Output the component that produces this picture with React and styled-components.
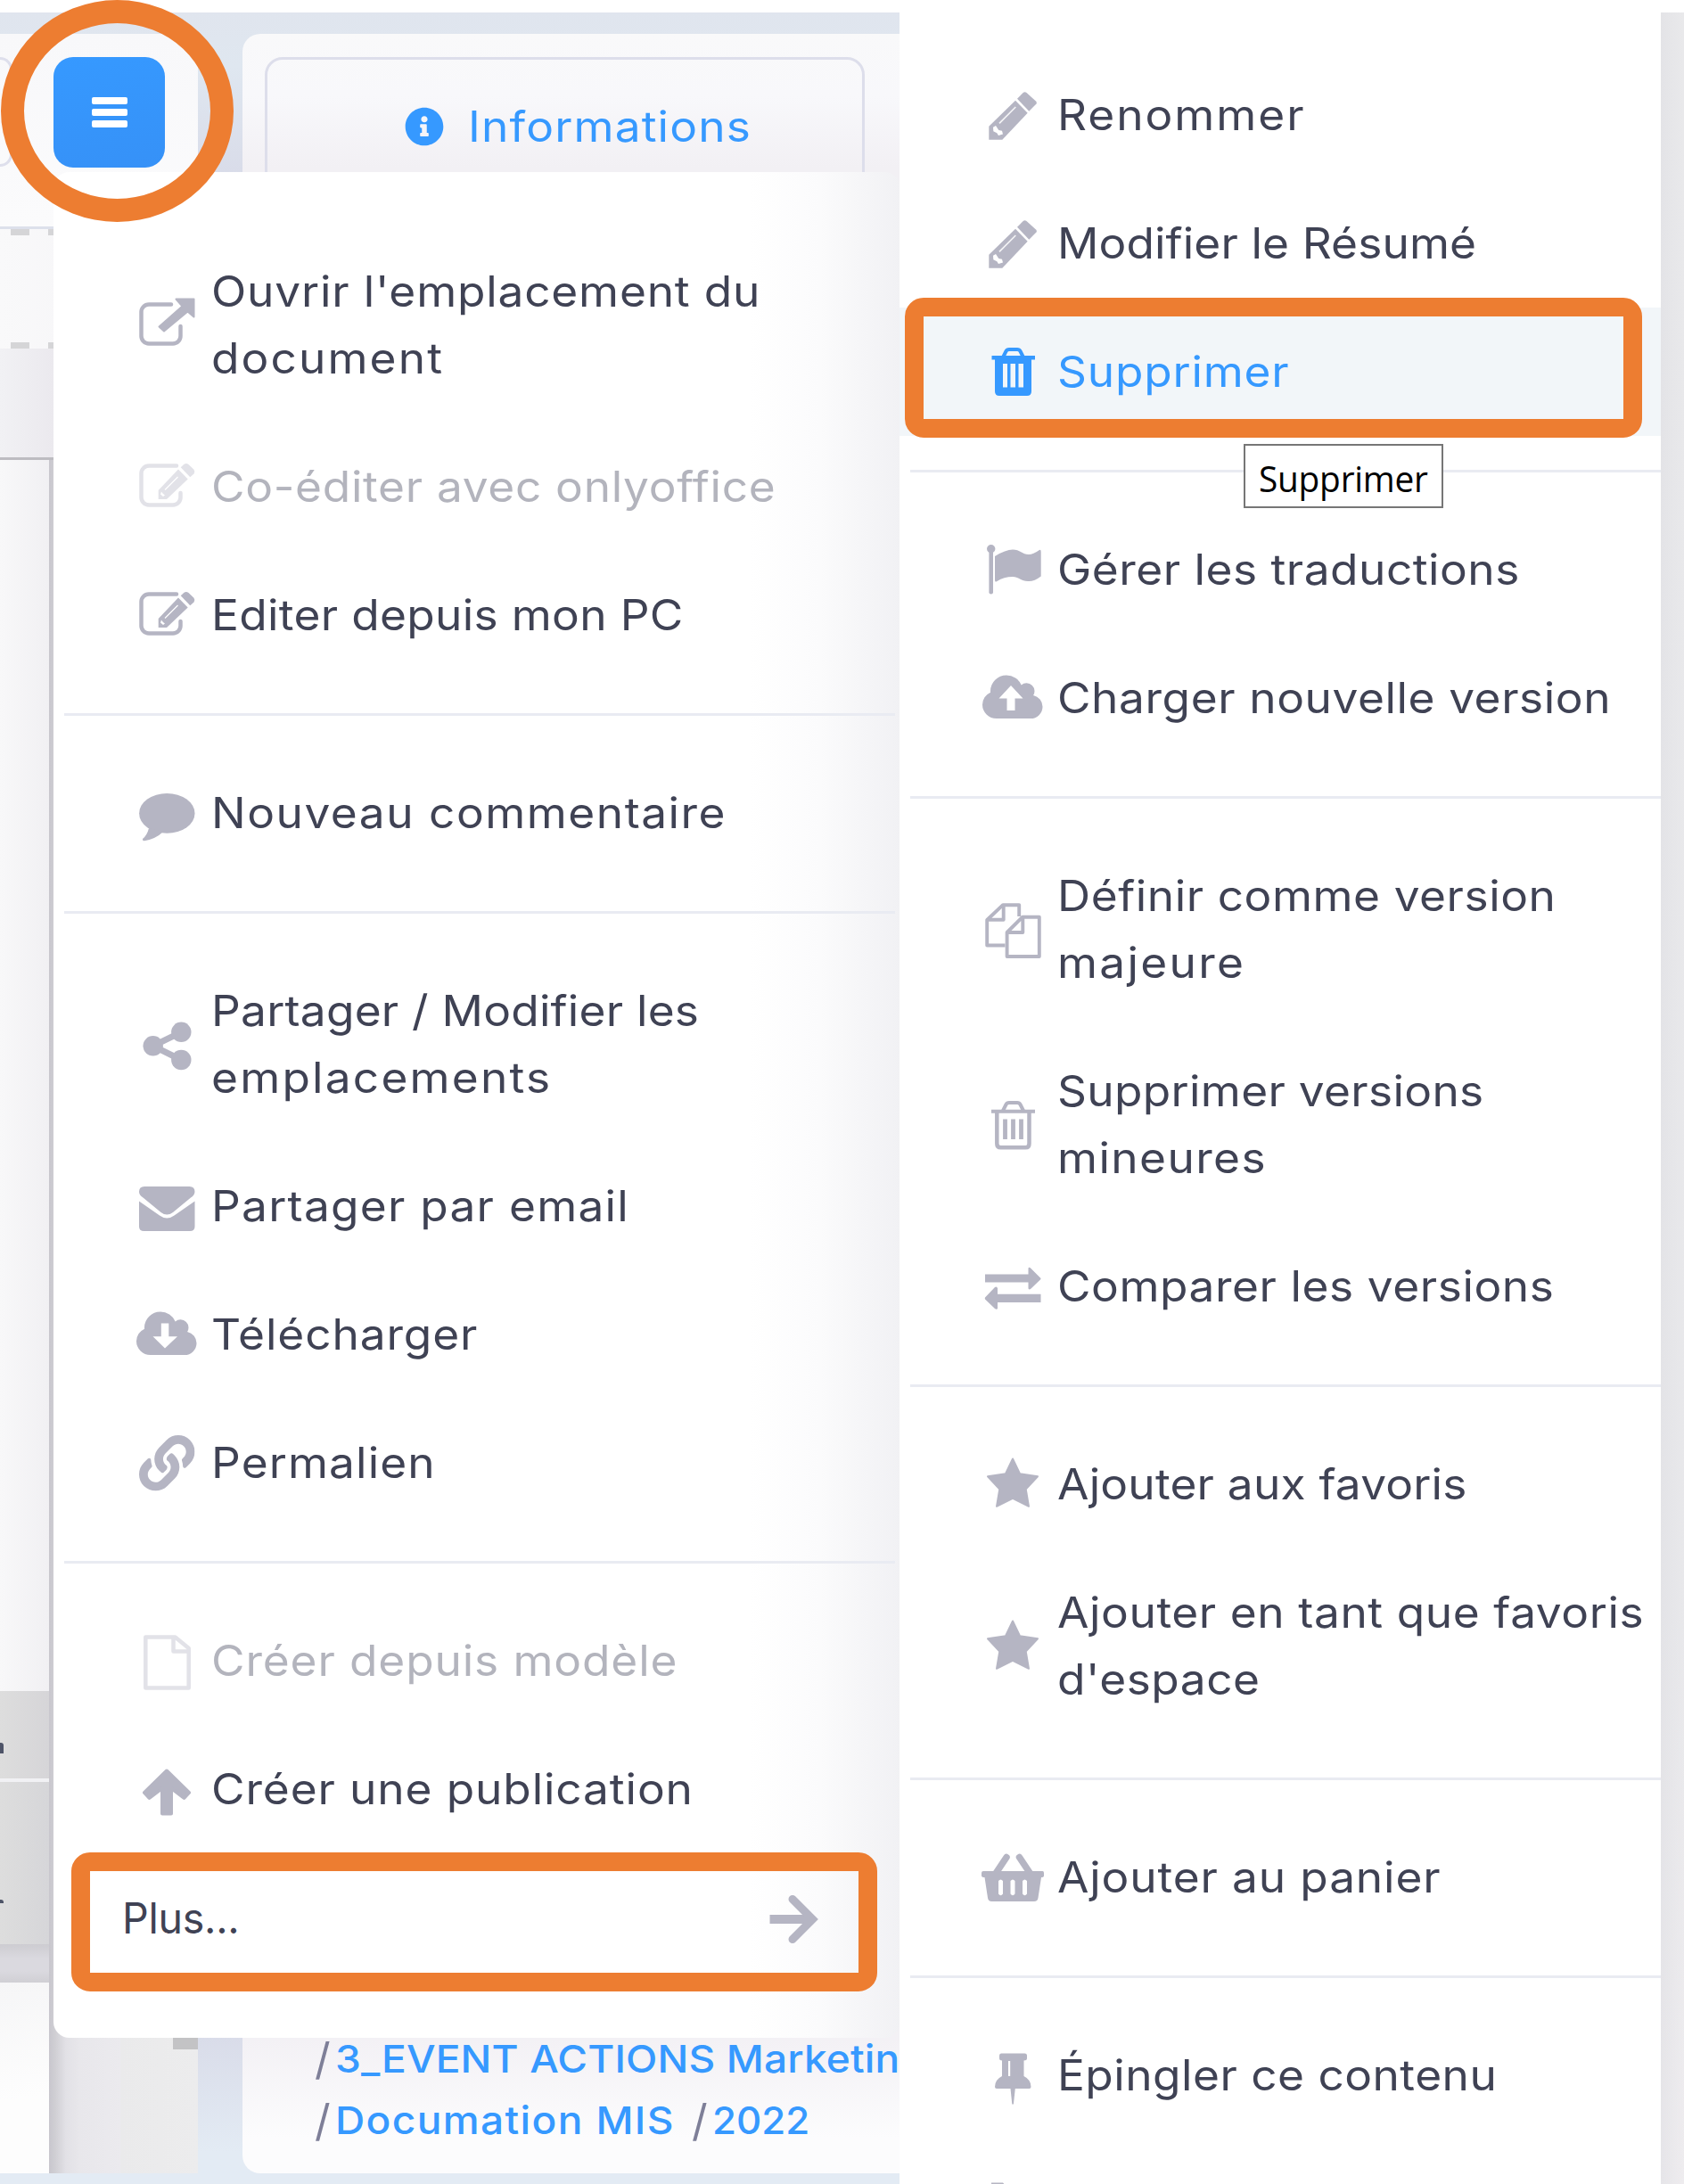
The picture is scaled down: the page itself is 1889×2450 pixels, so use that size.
import React, { useLayoutEffect, useRef, useState } from "react";
import styled, { createGlobalStyle, css } from "styled-components";
import { FaLink, FaInfoCircle } from "react-icons/fa";

const ink = "#3f4254";
const muted = "#b5b5c3";
const blue = "#3699ff";
const orange = "#ed7d31";

const Global = createGlobalStyle`
  *, *::before, *::after { box-sizing: border-box; }
  html, body { margin: 0; padding: 0; background: #fff; }
  body { font-family: Inter, "Noto Sans", "Liberation Sans", sans-serif; color: ${ink}; }
`;

/* ---------- text ---------- */

const Line = styled.span`
  display: block;
  width: max-content;
  white-space: nowrap;
  transform-origin: 0 50%;
`;

/* Widens a single line of text to the given width: glyphs first, tracking for the rest. */
function Fit({ text, width }) {
  const ref = useRef(null);
  const [fit, setFit] = useState({ scale: 1, spacing: 0 });
  useLayoutEffect(() => {
    const natural = ref.current.offsetWidth - fit.spacing * text.length;
    const scale = Math.min(1.07, Math.max(0.97, width / natural));
    setFit({ scale, spacing: (width / scale - natural) / text.length });
  }, [text, width]);
  return (
    <Line ref={ref} style={{ letterSpacing: `${fit.spacing}px`, transform: `scaleX(${fit.scale})` }}>
      {text}
    </Line>
  );
}

/* ---------- icons (origin is the centre of the row) ---------- */

const Glyph = styled.svg`
  display: block;
  flex: none;
  width: 72px;
  height: 80px;
  fill: currentColor;
`;

const Icon = ({ children }) => <Glyph viewBox="-36 -40 72 80">{children}</Glyph>;

const stroke = (w, extra) => ({
  fill: "none",
  stroke: "currentColor",
  strokeWidth: w,
  ...extra,
});

const External = () => (
  <Icon>
    <path d="M5-23.5H-20a8.5 8.5 0 0 0-8.5 8.500V12a8.500 8.500 0 0 0 8.500 8.500H7a8.500 8.500 0 0 0 8.500-8.500V1" {...stroke(4.5, { strokeLinecap: "round" })} />
    <path d="M10.500-29.500H30.500V-9.500L23.500-15.500L-3 6.500L-8.500 1.500L17.500-21.500Z" {...stroke(2, { fill: "currentColor", strokeLinejoin: "round" })} />
  </Icon>
);

const Edit = () => (
  <Icon>
    <path d="M11-23.500H-20a8.500 8.500 0 0 0-8.500 8.500V12a8.500 8.500 0 0 0 8.500 8.500H7a8.500 8.500 0 0 0 8.500-8.500V7" {...stroke(4.500, { strokeLinecap: "round" })} />
    <path d="M-9.300 14V4L13-19.500L23.700-8.500L0 14Z" />
    <path d="M15.700-21.800L19.500-25.300Q22-27 24.500-25L30.500-19.300Q32.200-17 30.500-14.500L26.300-10.800Z" />
    <path d="M-2 3.500L12.500-11" {...stroke(1.300, { stroke: "#fff" })} />
    <path d="M-6 5.500L-4 8L-2 9.500L-4 11L-7 8.500Z" fill="#fff" />
  </Icon>
);

const Pencil = () => (
  <Icon>
    <path d="M-26.700 27.700V12.700L3-16.300L16.700-2.300L-11.700 27.700Z" />
    <path d="M5-18.300L11.700-25Q13.500-26.300 15.500-25L26-15.500Q27.500-14 26.500-12.500L18.300-4.300Z" />
    <path d="M-15 9.300L3.300-9" {...stroke(1.700, { stroke: "#fff", strokeOpacity: 0.85 })} />
    <path d="M-22 13.700L-19 12L-15.700 17L-12 17.700L-11 21.500L-16 23L-17.700 20.300L-21.700 18.300Z" fill="#fff" />
  </Icon>
);

const Comment = () => (
  <Icon>
    <ellipse cx="0.3" cy="0.4" rx="31.2" ry="22.4" />
    <path d="M-20 17Q-22 25-27 29Q-27.500 31.500-25 31.300Q-12 29-4 21Z" />
  </Icon>
);

const Share = () => (
  <Icon>
    <path d="M16.300-14.200L-15.300 1.300L16.300 17" {...stroke(7)} />
    <circle cx="16.300" cy="-14.200" r="11.200" />
    <circle cx="-15.300" cy="1.300" r="11.200" />
    <circle cx="16.300" cy="17" r="11.200" />
  </Icon>
);

const Mail = () => (
  <Icon>
    <path d="M-31-16Q-31-22-25-22H25.500Q31.500-22 31.500-16Q31-12 27-9.500L7 7Q0.300 12 -6.500 7L-26.500-9.500Q-31-12.500-31-16Z" />
    <path d="M-31-5.500L-8 10.500Q0.300 16.500 8.500 10.500L31.500-5.500V23Q31.500 28 26 28H-25.500Q-31 28-31 23Z" />
  </Icon>
);

const CloudShape = () => (
  <path
    transform="translate(-31.750 -29.900) scale(.03516 .03445)"
    d="M1856 1152q0 159-112.500 271.500t-271.500 112.500h-1088q-185 0-316.500-131.500t-131.500-316.500q0-130 70-240t188-165q-2-30-2-43 0-212 150-362t362-150q156 0 285.500 87t188.500 231q71-62 166-62 106 0 181 75t75 181q0 76-41 138 130 31 213.500 135.500t83.500 238.500z"
  />
);

const CloudDown = () => (
  <Icon>
    <CloudShape />
    <path fill="#fff" d="M-6.200-12.500H2.300V2.300H12L-2 15.500L-15.500 2.300H-6.200Z" />
  </Icon>
);

const CloudUp = () => (
  <Icon>
    <CloudShape />
    <path fill="#fff" d="M-2-14L11.500 .5H2.500V14H-6.500V.5H-15.500Z" />
  </Icon>
);

const Chain = () => (
  <Icon>
    <FaLink x="-31" y="-31" size="62.5" />
  </Icon>
);

const File = () => (
  <Icon>
    <path d="M-23.700-26.500H9.500L24.700-14V30.500H-23.700Z M7.500-26V-10.500H24.700" {...stroke(4.500, { strokeLinejoin: "round" })} />
  </Icon>
);

const ArrowUp = () => (
  <Icon>
    <path d="M0-20.500L25 4L19.500 10L5-1V27.500H-5V-1L-19.500 10L-25 4Z" {...stroke(4, { fill: "currentColor", strokeLinejoin: "round" })} />
  </Icon>
);

const ArrowRight = () => (
  <Icon>
    <path d="M-26.500 2H18" {...stroke(10, { strokeLinecap: "butt" })} />
    <path d="M-1-20.500L21.500 2L-1 24.500" {...stroke(9, { strokeLinecap: "round", strokeLinejoin: "miter" })} />
  </Icon>
);

const TrashHandle = () => (
  <path d="M-11-16L-7.500-23Q-6.500-25-4-25H5Q7.500-25 8.500-23L12-16" {...stroke(4)} />
);

const TrashFull = () => (
  <Icon>
    <TrashHandle />
    <path
      fillRule="evenodd"
      d="M-23.500-18H25V-13.500H21V22Q21 27 16 27H-15Q-20 27-20 22V-13.500H-23.500ZM-11-9V17.500H-6V-9ZM-2.500-9V17.500H3V-9ZM6.500-9V17.500H12V-9Z"
    />
  </Icon>
);

const TrashOpen = () => (
  <Icon>
    <TrashHandle />
    <path d="M-24-15.300H25" {...stroke(4)} />
    <path d="M-17.700-15V21Q-17.700 25.300-13.500 25.300H14.500Q18.500 25.300 18.500 21V-15" {...stroke(4.500)} />
    <path d="M-8.500-6.500V16M.5-6.500V16M9.500-6.500V16" {...stroke(4.800)} />
  </Icon>
);

const Flag = () => (
  <Icon>
    <circle cx="-24.300" cy="-23.300" r="4.700" />
    <path d="M-24.300-22V25.300" {...stroke(4.600, { strokeLinecap: "round" })} />
    <path d="M-20-15Q-8-22.500 0-22.500C8-22.500 11-17 18-17Q23-17 29.500-21.800Q31.700-23 31.700-20V7.500Q24 13.500 17 13C10 13 6 8 0 8Q-10 8-17.500 13Q-20 14.500-20 12Z" />
  </Icon>
);

const Files = () => (
  <Icon>
    <path d="M-8.500 17.500H-28.800V-11L-11-27.800H7.200V-15M-10.300-27.500V-11.300H-28.800" {...stroke(3.900, { strokeLinejoin: "round" })} />
    <path d="M-6.400 3L11-14.300H29.800V30H-6.400ZM11.300-14V3H-6" {...stroke(3.900, { strokeLinejoin: "round" })} />
  </Icon>
);

const Swap = () => (
  <Icon>
    <path d="M-31-13.400H17.500V-20.500Q18.500-22 20-20.500L31.500-9Q31.500-8 31-7.500L20 3Q18.500 4 17.500 2.500V-4.400H-31Z" />
    <path d="M31.500 8.800H-17V2Q-18-.5-20 1L-31 12.500Q-31.500 13.500-31 14.500L-20 25Q-18 26.500-17 25V18H31.500Z" />
  </Icon>
);

const Star = () => (
  <Icon>
    <path d="M0-28.500L8-11.800L28-8.800L14.700 5.500L18 24.800L0 15.800L-18 24.800L-14.700 5.500L-28-8.800L-8-11.800Z" {...stroke(2, { fill: "currentColor", strokeLinejoin: "round" })} />
  </Icon>
);

const Basket = () => (
  <Icon>
    <path d="M-7-22.500L-20-3M7.500-22.500L20.500-3" {...stroke(7.500, { strokeLinecap: "round" })} />
    <path
      fillRule="evenodd"
      d="M-33-7H33.500Q35-7 35-5V-2Q35 0 32 0L28.500 23Q28 27 24 27H-23.500Q-27.500 27-28 23L-31.500 0Q-35 0-35-2V-5Q-35-7-33-7ZM-16 4V18.500Q-13.500 22-11 18.500V4Q-13.500 1-16 4ZM-2.500 4V18.500Q0 22 2.500 18.500V4Q0 1-2.500 4ZM11 4V18.500Q13.500 22 16 18.500V4Q13.500 1 11 4Z"
    />
  </Icon>
);

const Pin = () => (
  <Icon>
    <path
      fillRule="evenodd"
      d="M-13-24.500H13.500Q16-24.500 16-22V-19Q16-16.500 12.500-16.500V1Q20.500 5 20.500 13Q20.500 15 18.500 15H2.800L.9 32.500H-.7L-2.500 15H-18Q-20 15-20 13Q-20 5-12 1V-16.500Q-15-16.500-15-19V-22Q-15-24.500-13-24.500ZM-5-16V1H-2.800V-16Z"
    />
  </Icon>
);

const Tag = () => (
  <Icon>
    <path d="M-24-23.500H-11L-8-20V20H-24Z" />
  </Icon>
);

/* ---------- page behind the menus ---------- */

const Page = styled.main`
  position: relative;
  width: 1889px;
  height: 2450px;
  overflow: hidden;
  padding-top: 14px;
  background: #fff;
`;

const Backdrop = styled.div`
  display: flex;
  gap: 50px;
  height: 2436px;
  padding: 24px 0 12px;
  background: linear-gradient(180deg, #e0e5ee 0, #dfe7f0 60px, #d9dce9 180px, #d9dce9 2270px, #e3ebf4 2400px, #e3ebf4 100%);
`;

const Viewer = styled.section`
  display: flex;
  flex-direction: column;
  width: 222px;
  flex: none;
  overflow: hidden;
  background: linear-gradient(90deg, #f9f9fa, #f3f2f5);
`;

const ToolRow = styled.div`
  display: flex;
  flex: none;
  align-items: flex-start;
  gap: 46px;
  height: 219px;
  padding-top: 26px;
  border-bottom: 3px solid #dde0eb;
  background: linear-gradient(180deg, #f8f8fa, #fbfbfc);
`;

const FieldEnd = styled.div`
  width: 14px;
  height: 123px;
  border: 3px solid #dedfec;
  border-left: 0;
  border-radius: 0 22px 22px 0;
`;

const MenuButton = styled.button`
  display: flex;
  flex-direction: column;
  align-items: center;
  justify-content: center;
  gap: 5px;
  width: 125px;
  height: 124px;
  padding: 0;
  border: 0;
  border-radius: 22px;
  background: linear-gradient(170deg, #3699ff, #3691f7);
`;

const Bar = styled.i`
  width: 40px;
  height: 8px;
  border-radius: 2px;
  background: #fff;
`;

const DashBand = styled.div`
  display: flex;
  flex: none;
  flex-direction: column;
  justify-content: space-between;
  height: 134px;
`;

const Dashes = styled.div`
  height: 7px;
  background: repeating-linear-gradient(90deg, transparent 0 12px, #d5d5d7 12px 33px, transparent 33px 42px);
`;

const Gutter = styled.div`
  flex: none;
  height: 122px;
  background: linear-gradient(90deg, #f1f1f4, #ebe9ee 60px);
`;

const Sheet = styled.div`
  display: flex;
  flex-direction: column;
  flex: 1;
  border-top: 3px solid #bdbcc1;
  background: linear-gradient(90deg, #c8c6cd 55px, #d0cfd4 62px, #e2e1e6 74px, #e8e7eb 90px, #ebeaee 135px, #eaeaeb 136px, #ececed);
`;

const Leaf = styled.div`
  flex: none;
  width: 55px;
  height: ${(p) => p.$h}px;
  overflow: hidden;
  background: ${(p) => p.$bg};
`;

const Speck = styled.i`
  display: block;
  width: 4px;
  height: ${(p) => p.$h}px;
  margin-top: ${(p) => p.$top}px;
  border-radius: 0 3px 0 0;
  background: #4e5468;
`;

const ScrollEnd = styled.i`
  width: 28px;
  height: 75px;
  margin: 0 0 0 139px;
  background: #c3c3c5;
`;

const FootRow = styled.div`
  display: flex;
  align-items: flex-start;
  height: 214px;
`;

const InfoCard = styled.section`
  display: flex;
  flex-direction: column;
  justify-content: space-between;
  width: 760px;
  padding: 26px 0 0 25px;
  border-radius: 20px;
  background: linear-gradient(180deg, #f9f9fa 0, #f8f8fb 70px, #f2f0f4 150px, #f3f1f5 2250px, #fcfcfd 2360px, #fcfcfd 100%);
`;

const Tab = styled.div`
  display: flex;
  align-items: center;
  gap: 27px;
  width: 673px;
  height: 155px;
  padding: 0 0 0 154px;
  border: 3px solid #dddeeb;
  border-radius: 20px;
  color: ${blue};
  font-size: 48px;
  line-height: 75px;

  svg { width: 44px; height: 44px; }
`;

const Path = styled.div`
  display: flex;
  flex-direction: column;
  height: 177px;
  padding: 14px 0 0 56px;
  font-size: 43px;
  font-weight: 500;
  line-height: 69px;
  color: ${blue};
`;

const Crumbs = styled.div`
  display: flex;
`;

const Slash = styled.span`
  width: 23px;
  margin-left: ${(p) => p.$before || 0}px;
  color: #7e7f98;
  font-size: 49px;
  font-weight: 400;
`;

const Crumb = styled.div`
  width: ${(p) => p.$w}px;
`;

/* ---------- menus ---------- */

const panel = css`
  position: absolute;
  display: flex;
  flex-direction: column;
`;

const Menu = styled.nav`
  ${panel}
  left: 60px;
  top: 193px;
  width: 950px;
  height: 2093px;
  padding: 62px 0 0;
  border-radius: 18px;
  background: linear-gradient(90deg, #fff 0, #fff 780px, #fbfbfc 860px, #f1f1f4 950px);
`;

const SubMenu = styled.nav`
  ${panel}
  left: 1009px;
  top: 14px;
  width: 854px;
  height: 2436px;
  padding-top: 43px;
  background: #fff;
  overflow: hidden;
`;

const RightEdge = styled.div`
  position: absolute;
  left: 1863px;
  top: 14px;
  width: 26px;
  height: 2436px;
  background: linear-gradient(90deg, rgba(226, 226, 230, 0.7), rgba(238, 238, 240, 0.3)), linear-gradient(180deg, #e7e7e9, #e6e6e9 1800px, #efecef);
`;

const Item = styled.a`
  display: flex;
  flex: none;
  align-items: center;
  gap: 14px;
  padding: 34.5px 0 34.5px 91px;
  font-size: 48px;
  line-height: 75px;
  color: ${(p) => (p.$active ? blue : p.$disabled ? "#b3b4bd" : ink)};
  background: ${(p) => (p.$active ? "#f2f6f9" : "transparent")};

  ${Glyph} {
    color: ${(p) => (p.$active ? blue : p.$disabled ? "#e2e2e8" : muted)};
    margin-top: -3px;
    margin-bottom: -3px;
  }
`;

const Label = styled.div`
  margin-top: -1px;
  margin-bottom: 1px;
`;

const MoreItem = styled(Item)`
  justify-content: space-between;
  padding-left: 77px;
  padding-right: 84px;
`;

const Rule = styled.hr`
  flex: none;
  height: 3px;
  margin: 38px ${(p) => p.$end || 0}px 37px 12px;
  border: 0;
  background: #e9ebf2;
`;

function Entry({ icon: I, lines, ...state }) {
  return (
    <Item {...state}>
      <I />
      <Label>
        {lines.map(([text, width]) => (
          <Fit key={text} text={text} width={width} />
        ))}
      </Label>
    </Item>
  );
}

/* ---------- highlights ---------- */

const Ring = styled.div`
  position: absolute;
  left: 1px;
  top: 0;
  width: 261px;
  height: 249px;
  border: 26.5px solid ${orange};
  border-radius: 50%;
`;

const Frame = styled.div`
  position: absolute;
  left: ${(p) => p.$x}px;
  top: ${(p) => p.$y}px;
  width: ${(p) => p.$w}px;
  height: ${(p) => p.$h}px;
  border: 21px solid ${orange};
  border-radius: 21px;
`;

const Tooltip = styled.div`
  position: absolute;
  left: 1395px;
  top: 498px;
  width: 224px;
  height: 72px;
  padding: 3px 0 0 15px;
  border: 2px solid #767676;
  background: #fff;
  color: #000;
  font: 40px/68px "Open Sans", "Noto Sans", sans-serif;
`;

const mainGroups = [
  [
    { icon: External, lines: [["Ouvrir l'emplacement du", 616], ["document", 261]] },
    { icon: Edit, lines: [["Co-éditer avec onlyoffice", 633]], $disabled: true },
    { icon: Edit, lines: [["Editer depuis mon PC", 530]] },
  ],
  [{ icon: Comment, lines: [["Nouveau commentaire", 578]] }],
  [
    { icon: Share, lines: [["Partager / Modifier les", 547], ["emplacements", 382]] },
    { icon: Mail, lines: [["Partager par email", 469]] },
    { icon: CloudDown, lines: [["Télécharger", 299]] },
    { icon: Chain, lines: [["Permalien", 252]] },
  ],
  [
    { icon: File, lines: [["Créer depuis modèle", 523]], $disabled: true },
    { icon: ArrowUp, lines: [["Créer une publication", 541]] },
  ],
];

const subGroups = [
  [
    { icon: Pencil, lines: [["Renommer", 278]] },
    { icon: Pencil, lines: [["Modifier le Résumé", 470]] },
    { icon: TrashFull, lines: [["Supprimer", 261]], $active: true },
  ],
  [
    { icon: Flag, lines: [["Gérer les traductions", 519]] },
    { icon: CloudUp, lines: [["Charger nouvelle version", 621]] },
  ],
  [
    { icon: Files, lines: [["Définir comme version", 560], ["majeure", 211]] },
    { icon: TrashOpen, lines: [["Supprimer versions", 479], ["mineures", 235]] },
    { icon: Swap, lines: [["Comparer les versions", 558]] },
  ],
  [
    { icon: Star, lines: [["Ajouter aux favoris", 460]] },
    { icon: Star, lines: [["Ajouter en tant que favoris", 658], ["d'espace", 228]] },
  ],
  [{ icon: Basket, lines: [["Ajouter au panier", 430]] }],
  [
    { icon: Pin, lines: [["Épingler ce contenu", 493]] },
    { icon: Tag, lines: [] },
  ],
];

const Groups = ({ groups, end }) =>
  groups.map((items, g) => (
    <React.Fragment key={g}>
      {g > 0 && <Rule $end={end} />}
      {items.map((item, i) => (
        <Entry key={i} {...item} />
      ))}
    </React.Fragment>
  ));

export default function App() {
  return (
    <>
      <Global />
      <Page>
        <Backdrop>
          <Viewer>
            <ToolRow>
              <FieldEnd />
              <MenuButton aria-label="Menu">
                <Bar />
                <Bar />
                <Bar />
              </MenuButton>
            </ToolRow>
            <DashBand>
              <Dashes />
              <Dashes />
            </DashBand>
            <Gutter />
            <Sheet>
              <Leaf $h={1381} $bg="linear-gradient(90deg, #f8f8f9, #f1f0f3)" />
              <Leaf $h={98} $bg="linear-gradient(90deg, #dddddd, #d6d5d8)">
                <Speck $top={58} $h={12} />
              </Leaf>
              <Leaf $h={4} $bg="#f1f1f4" />
              <Leaf $h={182} $bg="linear-gradient(90deg, #dddddd, #d6d6d9)">
                <Speck $top={132} $h={4} />
              </Leaf>
              <Leaf $h={43} $bg="linear-gradient(180deg, #cdccd1, #dad9df 16px, #dad9df 30px, #d0cfd4)" />
              <FootRow>
                <Leaf $h={214} $bg="linear-gradient(170deg, #f6f6f7, #fdfdfd 60%)" />
                <ScrollEnd />
              </FootRow>
            </Sheet>
          </Viewer>
          <InfoCard>
            <Tab>
              <FaInfoCircle />
              <Fit text="Informations" width={318} />
            </Tab>
            <Path>
              <Crumbs>
                <Slash>/</Slash>
                <Fit text="3_EVENT ACTIONS Marketin" width={633} />
              </Crumbs>
              <Crumbs>
                <Slash>/</Slash>
                <Crumb $w={381}>
                  <Fit text="Documation MIS" width={381} />
                </Crumb>
                <Slash $before={19}>/</Slash>
                <Fit text="2022" width={109} />
              </Crumbs>
            </Path>
          </InfoCard>
        </Backdrop>

        <Menu>
          <Groups groups={mainGroups} end={6} />
          <MoreItem>
            <Fit text="Plus..." width={131} />
            <ArrowRight />
          </MoreItem>
        </Menu>
        <SubMenu>
          <Groups groups={subGroups} />
        </SubMenu>
        <RightEdge />

        <Tooltip>
          <Fit text="Supprimer" width={190} />
        </Tooltip>
        <Ring />
        <Frame $x={80} $y={2078} $w={904} $h={156} />
        <Frame $x={1015} $y={334} $w={827} $h={157} />
      </Page>
    </>
  );
}
